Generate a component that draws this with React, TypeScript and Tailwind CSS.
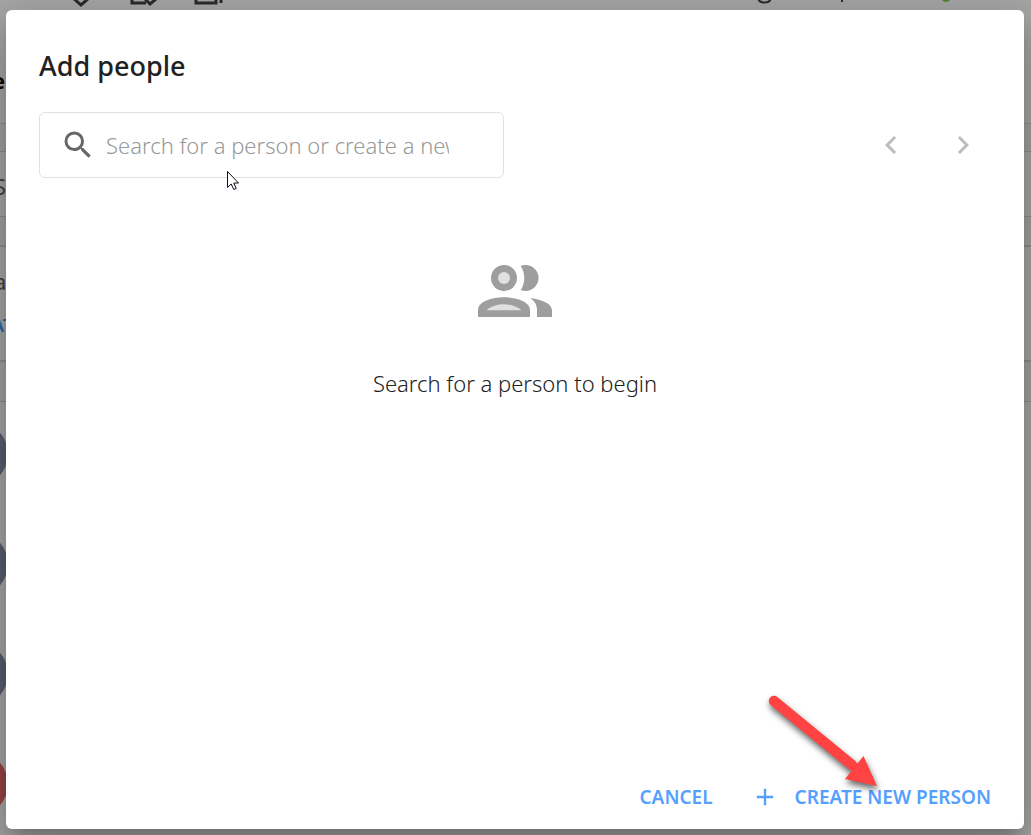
import { useState } from "react";
import { MdAdd, MdChevronLeft, MdChevronRight, MdSearch } from "react-icons/md";

const avatars = ["bg-[#7f889f]", "bg-[#7f889f]", "bg-[#7f889f]", "bg-[#e65d60]"];

function PeopleIcon() {
  return (
    <svg viewBox="0 0 74 52" className="h-[52px] w-[74px]" fill="#9e9e9e" aria-hidden="true">
      <circle cx="26" cy="13" r="13" />
      <circle cx="26" cy="13" r="6" fill="#e0e0e0" />
      <path d="M42.7.9A13 13 0 1 1 42.7 25C47.5 18 47.5 8 42.7.9Z" />
      <path d="M0 52V45C0 36.500 14 32.300 26 32.300S52 36.500 52 45V52Z" />
      <path d="M8.500 45.300C13 41.200 20 39.300 26 39.300S39 41.200 43.500 45.300Z" fill="#e0e0e0" />
      <path d="M52 33C65 34.500 74 39 74 45.500V52H59V45C59 39.500 56.500 36 52 33Z" />
    </svg>
  );
}

function Cursor() {
  return (
    <svg viewBox="0 0 13 20" className="pointer-events-none absolute left-[227px] top-[171px] h-5 w-[13px]" aria-hidden="true">
      <path d="M.5.500V16.500L4.200 13 6.800 18.500 9.200 17.400 6.800 12H11.500Z" fill="#fff" stroke="#0b0b1a" />
    </svg>
  );
}

function Arrow() {
  return (
    <svg viewBox="0 0 120 104" className="pointer-events-none absolute bottom-10 right-[147px] h-[104px] w-[120px] drop-shadow-[1px_4px_3px_rgba(0,0,0,0.6)]" aria-hidden="true">
      <path d="M10 10 88 74" stroke="#ff4242" strokeWidth="10.500" strokeLinecap="round" />
      <path d="M113 95 99.500 65 81 88Z" fill="#ff4242" />
    </svg>
  );
}

function Backdrop() {
  return (
    <div className="fixed inset-0 overflow-hidden bg-white text-[22px] leading-7 text-[#555]" aria-hidden="true">
      <div className="flex h-[124px] flex-col border-b border-[#d5d5d5]">
        <svg viewBox="0 0 1031 10" className="h-[10px] w-[1031px] shrink-0" fill="none" stroke="#333" strokeWidth="3">
          <path d="M73-2 81 5 89-2M132-2V3H146M145-1 150 4 156-1M196-2V3H216V-2M221-2V3" />
          <path d="M758-2C759 4 770 4 771-2M842-2V2" strokeWidth="2" />
          <circle cx="946" cy="-3" r="5" fill="#7cc243" stroke="none" />
        </svg>
        <span className="-ml-2 pt-14 font-bold text-black">er</span>
      </div>
      <div className="h-7 border-b border-[#d5d5d5] bg-[#f7f7f7]" />
      <div className="h-[65px] border-b border-[#d5d5d5] pt-5">
        <span className="-ml-[6px]">S</span>
      </div>
      <div className="h-[30px] border-b-2 border-[#d5d5d5] bg-[#f7f7f7]" />
      <div className="flex h-[115px] flex-col gap-4 border-b-2 border-[#d5d5d5] pt-5">
        <span className="-ml-[6px]">a</span>
        <span className="-ml-2 text-[18px] font-semibold text-[#3897ff]">AT</span>
      </div>
      <div className="h-10 border-b border-[#d5d5d5] bg-[#f7f7f7]" />
      <div className="-ml-14 flex flex-col gap-[46px] pt-5">
        {avatars.map((color, i) => (
          <div key={i} className={`size-16 shrink-0 rounded-full ${color}`} />
        ))}
      </div>
    </div>
  );
}

export default function App() {
  const [query, setQuery] = useState("");

  return (
    <div className="font-['Noto_Sans','Open_Sans',sans-serif]">
      <Backdrop />
      <div className="fixed inset-0 flex bg-[#212121]/40 pb-[6px] pl-[6px] pr-[7px] pt-[10px]">
        <div role="dialog" aria-labelledby="title" className="flex flex-1 flex-col rounded-md bg-white px-[33px] pb-4 pt-9 shadow-[0_11px_15px_-7px_rgba(0,0,0,0.2),0_24px_38px_3px_rgba(0,0,0,0.14),0_9px_46px_8px_rgba(0,0,0,0.12)]">
          <h2 id="title" className="text-[27px] font-medium leading-10 text-[#212121]">Add people</h2>

          <div className="mt-[26px] flex items-center justify-between">
            <label className="flex h-[66px] w-[465px] items-center gap-[10px] rounded-md border border-[#e0e0e0] pl-5 pr-[54px]">
              <MdSearch className="size-9 shrink-0 text-[#666]" />
              <input
                type="text"
                aria-label="Search for a person"
                placeholder="Search for a person or create a new one"
                value={query}
                onChange={(e) => setQuery(e.target.value)}
                className="min-w-0 flex-1 text-[22px] font-light leading-8 text-[#212121] outline-none placeholder:text-[#999]"
              />
            </label>
            <div className="flex gap-9 pr-[10px] text-[#bdbdbd]">
              <button type="button" disabled aria-label="Previous"><MdChevronLeft className="size-9" /></button>
              <button type="button" disabled aria-label="Next"><MdChevronRight className="size-9" /></button>
            </div>
          </div>

          <div className="flex flex-1 flex-col items-center gap-[50px] pt-[87px]">
            <PeopleIcon />
            <p className="text-[22px] font-light leading-8 text-[#212121]">Search for a person to begin</p>
          </div>

          <div className="flex items-center justify-end gap-[38px] text-[19px] font-semibold leading-8 text-[#559fff]">
            <button type="button">CANCEL</button>
            <button type="button" className="flex items-center gap-4">
              <MdAdd className="size-7" />
              CREATE NEW PERSON
            </button>
          </div>
        </div>
      </div>
      <div className="pointer-events-none fixed inset-0">
        <Cursor />
        <Arrow />
      </div>
    </div>
  );
}
